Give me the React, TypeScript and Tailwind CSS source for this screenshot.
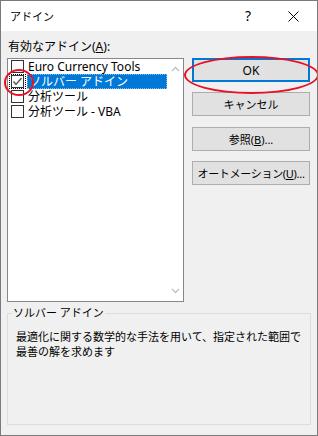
export default function App() {
  const items = [
    { label: "Euro Currency Tools", checked: false, selected: false, latin: true },
    { label: "ソルバー アドイン", checked: true, selected: true, latin: false },
    { label: "分析ツール", checked: false, selected: false, latin: false },
    { label: "分析ツール - VBA", checked: false, selected: false, latin: false },
  ];

  const font = { fontFamily: '"Noto Sans", "Noto Sans CJK JP", sans-serif' };

  return (
    <div
      className="relative flex h-[436px] w-[318px] flex-col overflow-hidden border border-[#7a7a7a] bg-[#f0f0f0] text-[11px] text-black"
      style={font}
    >
      {/* title bar */}
      <div className="flex h-[30px] items-center bg-white pl-[9px]">
        <span className="flex-1 leading-[15px]">アドイン</span>
        <span className="w-[20px] text-center text-[14px] leading-[16px]">?</span>
        <span className="ml-[25px] mr-[14px] flex h-[20px] w-[20px] items-center justify-center">
          <svg width="11" height="11" viewBox="0 0 11 11">
            <path d="M0.5 0.5 L10.5 10.5 M10.5 0.5 L0.5 10.5" stroke="#000" strokeWidth="1" />
          </svg>
        </span>
      </div>

      {/* body */}
      <div className="flex flex-1 flex-col px-[6px]">
        <div className="h-[27px] whitespace-nowrap pl-[1px] pt-[8px] text-[12px] leading-[15px]">
          有効なアドイン(<span className="underline">A</span>):
        </div>

        <div className="flex gap-[8px]">
          {/* list box */}
          <div className="relative flex h-[244px] w-[177px] border border-[#828790] bg-white">
            <div className="flex-1">
              {items.map((it) => (
                <div key={it.label} className="flex h-[15px] items-center overflow-hidden">
                  <div
                    className={
                      it.selected
                        ? "ml-[1px] flex h-[15px] w-[17px] items-center justify-center border border-dotted border-black"
                        : "ml-[2px] flex h-[15px] w-[15px] items-center justify-center"
                    }
                  >
                    <div className="flex h-[13px] w-[13px] items-center justify-center border border-[#333] bg-white">
                      {it.checked && (
                        <svg width="11" height="11" viewBox="0 0 11 11">
                          <path d="M1.5 5.5 L4 8.5 L9.5 2" stroke="#555" strokeWidth="1.4" fill="none" />
                        </svg>
                      )}
                    </div>
                  </div>
                  <div
                    className={
                      (it.latin ? "text-[12px] " : "text-[12px] ") +
                      (it.selected
                        ? "ml-[1px] flex h-[15px] w-[140px] items-center whitespace-nowrap border border-dotted border-[#ffffff80] bg-[#0078d7] pl-[1px] leading-[13px] text-white"
                        : "ml-[3px] whitespace-nowrap leading-[15px]")
                    }
                  >
                    {it.label}
                  </div>
                </div>
              ))}
            </div>
            {/* scrollbar */}
            <div className="flex w-[17px] flex-col justify-between py-[6px]">
              <svg width="17" height="8" viewBox="0 0 17 8">
                <path d="M5 6 L8.5 2.5 L12 6" stroke="#c0c0c0" strokeWidth="1.3" fill="none" />
              </svg>
              <svg width="17" height="8" viewBox="0 0 17 8">
                <path d="M5 2 L8.5 5.5 L12 2" stroke="#c0c0c0" strokeWidth="1.3" fill="none" />
              </svg>
            </div>
          </div>

          {/* buttons */}
          <div className="flex w-[118px] flex-col">
            <button className="h-[24px] border-2 border-[#0078d7] bg-[#e1e1e1] text-[12px] leading-[15px]">OK</button>
            <button className="mt-[10px] h-[24px] whitespace-nowrap border border-[#adadad] bg-[#e1e1e1] leading-[15px]">
              キャンセル
            </button>
            <button className="mt-[11px] h-[24px] whitespace-nowrap border border-[#adadad] bg-[#e1e1e1] leading-[15px]">
              参照(<span className="underline">B</span>)...
            </button>
            <button className="mt-[10px] h-[24px] whitespace-nowrap border border-[#adadad] bg-[#e1e1e1] leading-[15px] tracking-[-0.3px]">
              オートメーション(<span className="underline">U</span>)...
            </button>
          </div>
        </div>

        {/* group box */}
        <div className="relative mt-[11px] h-[112px] w-[304px] border border-[#dcdcdc]">
          <span className="absolute left-[4px] top-[-9px] whitespace-nowrap bg-[#f0f0f0] px-[1px] leading-[15px]">
            ソルバー アドイン
          </span>
          <p className="whitespace-nowrap pl-[8px] pt-[15px] leading-[15px]">
            最適化に関する数学的な手法を用いて、指定された範囲で
            <br />
            最善の解を求めます
          </p>
        </div>
      </div>

      {/* red annotation ellipses */}
      <div className="pointer-events-none absolute left-[3px] top-[68px] h-[27px] w-[30px] rounded-[50%] border-2 border-[#e81123]" />
      <div className="pointer-events-none absolute left-[183px] top-[55px] h-[38px] w-[135px] rounded-[50%] border-2 border-[#e81123]" />
    </div>
  );
}
